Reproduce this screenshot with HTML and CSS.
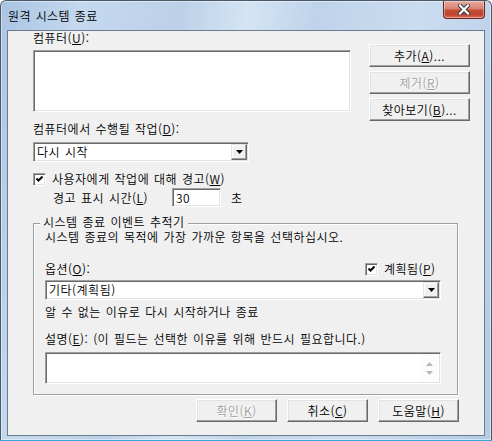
FILE: index.html
```html
<!DOCTYPE html>
<html lang="ko">
<head>
<meta charset="utf-8">
<title>원격 시스템 종료</title>
<link rel="stylesheet" href="styles.css">
</head>
<body>
<div class="window">
  <div class="titlebar">
    <span class="title">원격 시스템 종료</span>
    <div class="close">
      <svg width="12" height="11" viewBox="0 0 12 11"><path d="M2 1.5 L10 9.5 M10 1.5 L2 9.5" stroke="#3a3a3a" stroke-width="4.2" stroke-linecap="square"/><path d="M2 1.5 L10 9.5 M10 1.5 L2 9.5" stroke="#ffffff" stroke-width="2.2" stroke-linecap="square"/></svg>
    </div>
  </div>
  <div class="client">
    <div class="top">
      <div class="left">
        <div class="label">컴퓨터(<u>U</u>):</div>
        <div class="listbox sunken"></div>
      </div>
      <div class="side-buttons">
        <div class="btn">추가(<u>A</u>)...</div>
        <div class="btn disabled">제거(<u>R</u>)</div>
        <div class="btn">찾아보기(<u>B</u>)...</div>
      </div>
    </div>
    <div class="label l2">컴퓨터에서 수행될 작업(<u>D</u>):</div>
    <div class="combo sunken c1">
      <span class="value">다시 시작</span>
      <span class="drop"><svg width="7" height="4" viewBox="0 0 7 4"><path d="M0 0 H7 L3.5 4 Z" fill="#000"/></svg></span>
    </div>
    <div class="check-row">
      <span class="checkbox sunken"><svg width="9" height="9" viewBox="0 0 9 9"><path d="M1.5 3.5 L3.5 5.5 L7.5 1.5" fill="none" stroke="#000" stroke-width="2"/></svg></span>
      <span class="check-text">사용자에게 작업에 대해 경고(<u>W</u>)</span>
    </div>
    <div class="timer-row">
      <span class="timer-label">경고 표시 시간(<u>L</u>)</span>
      <div class="field sunken">30</div>
      <span class="unit">초</span>
    </div>
    <div class="group">
      <div class="legend"><span>시스템 종료 이벤트 추적기</span></div>
      <div class="line first">시스템 종료의 목적에 가장 가까운 항목을 선택하십시오.</div>
      <div class="option-row">
        <span class="opt-label">옵션(<u>O</u>):</span>
        <span class="checkbox sunken"><svg width="9" height="9" viewBox="0 0 9 9"><path d="M1.5 3.5 L3.5 5.5 L7.5 1.5" fill="none" stroke="#000" stroke-width="2"/></svg></span>
        <span class="check-text">계획됨(<u>P</u>)</span>
      </div>
      <div class="combo sunken c2">
        <span class="value">기타(계획됨)</span>
        <span class="drop"><svg width="7" height="4" viewBox="0 0 7 4"><path d="M0 0 H7 L3.5 4 Z" fill="#000"/></svg></span>
      </div>
      <div class="line reason">알 수 없는 이유로 다시 시작하거나 종료</div>
      <div class="line desc">설명(<u>E</u>): (이 필드는 선택한 이유를 위해 반드시 필요합니다.)</div>
      <div class="textarea sunken">
        <div class="vscroll">
          <svg width="7" height="4" viewBox="0 0 7 4"><path d="M0 4 H7 L3.5 0 Z" fill="#b8b8b8"/></svg>
          <svg width="7" height="4" viewBox="0 0 7 4"><path d="M0 0 H7 L3.5 4 Z" fill="#b8b8b8"/></svg>
        </div>
      </div>
    </div>
    <div class="bottom-buttons">
      <div class="btn disabled">확인(<u>K</u>)</div>
      <div class="btn">취소(<u>C</u>)</div>
      <div class="btn">도움말(<u>H</u>)</div>
    </div>
  </div>
</div>
</body>
</html>
```

FILE: styles.css
```css
* { box-sizing: border-box; }

html, body {
  margin: 0;
  padding: 0;
}

body {
  width: 492px;
  height: 441px;
  overflow: hidden;
  font-family: "Noto Sans CJK KR", "Liberation Sans", sans-serif;
  font-size: 12px;
  font-weight: 350;
  line-height: 14px;
  letter-spacing: 0.5px;
  word-spacing: 1px;
  color: #000;
  background: #fff;
}

u { text-underline-offset: 1px; }

.window {
  width: 492px;
  height: 441px;
  border: 1px solid #4a5868;
  border-bottom-color: #3aa8dc;
  border-radius: 6px 6px 1px 1px;
  background: linear-gradient(100deg, #a9c4e2 0%, #c4d8ee 14%, #bcd1e9 32%, #d4e4f3 44%, #bed3ea 56%, #cadcf0 74%, #b3cbe6 100%);
  box-shadow: inset 0 0 0 1px rgba(255,255,255,0.45);
  display: flex;
  flex-direction: column;
  padding: 0 6px 4px 6px;
}

.titlebar {
  height: 29px;
  display: flex;
  align-items: flex-start;
}

.title {
  align-self: center;
  padding-left: 1px;
  padding-top: 1px;
  font-size: 12px;
  letter-spacing: 0.4px;
  color: #000;
}

.close {
  margin-left: auto;
  width: 42px;
  height: 18px;
  border: 1px solid #6a2a22;
  border-top: none;
  border-radius: 0 0 4px 4px;
  background: linear-gradient(to bottom, #e9a99c 0%, #d98272 45%, #c44a33 55%, #c0432c 80%, #d9715a 100%);
  box-shadow: inset 0 0 0 1px rgba(255,255,255,0.35);
  display: flex;
  align-items: center;
  justify-content: center;
}

.client {
  flex: 1;
  background: #f0f0f0;
  border: 1px solid #6c7c90;
  padding-left: 25px;
  display: flex;
  flex-direction: column;
  align-items: flex-start;
}

.sunken {
  background: #fff;
  border: 1px solid;
  border-color: #a0a0a0 #fff #fff #a0a0a0;
  box-shadow: inset 1px 1px 0 #696969, inset -1px -1px 0 #e3e3e3;
}

.btn {
  height: 23px;
  display: flex;
  align-items: center;
  justify-content: center;
  background: #f0f0f0;
  border: 1px solid;
  border-color: #fff #696969 #696969 #fff;
  box-shadow: inset -1px -1px 0 #a0a0a0, inset 1px 1px 0 #e3e3e3;
}

.btn.disabled {
  color: #a0a0a0;
  text-shadow: 1px 1px 0 #fff;
}

.label {
  height: 14px;
}

.top {
  display: flex;
}

.left {
  width: 318px;
}

.listbox {
  margin-top: 5px;
  width: 318px;
  height: 62px;
}

.side-buttons {
  margin-left: 18px;
  width: 101px;
  padding-top: 13px;
  display: flex;
  flex-direction: column;
  gap: 4px;
}

.l2 {
  margin-top: 1px;
}

.combo {
  height: 20px;
  display: flex;
  align-items: center;
  padding: 1px 1px 1px 2px;
}

.combo .value {
  flex: 1;
  padding-left: 1px;
}

.drop {
  width: 16px;
  height: 16px;
  background: #f0f0f0;
  border: 1px solid;
  border-color: #e3e3e3 #696969 #696969 #e3e3e3;
  box-shadow: inset -1px -1px 0 #a0a0a0, inset 1px 1px 0 #fff;
  display: flex;
  align-items: center;
  justify-content: center;
}

.c1 {
  margin-top: 6px;
  width: 216px;
}

.check-row {
  margin-top: 10px;
  height: 14px;
  display: flex;
  align-items: center;
}

.checkbox {
  width: 13px;
  height: 13px;
  flex: none;
  display: flex;
  align-items: center;
  justify-content: center;
}

.check-text {
  margin-left: 6px;
}

.timer-row {
  margin-top: 2px;
  display: flex;
  align-items: center;
  padding-left: 20px;
}

.timer-label {
  width: 119px;
}

.field {
  width: 49px;
  height: 19px;
  padding: 1px 0 0 3px;
  display: flex;
  align-items: center;
}

.unit {
  margin-left: 10px;
}

.group {
  margin-top: 16px;
  width: 425px;
  border: 1px solid #a0a0a0;
  box-shadow: inset 1px 1px 0 #fff, 1px 1px 0 #fff;
  padding: 0 16px 10px 11px;
}

.legend {
  margin-top: -9px;
  height: 13px;
  line-height: 13px;
}

.legend span {
  display: inline-block;
  margin-left: -5px;
  padding: 0 3px;
  background: #f0f0f0;
  line-height: 13px;
}

.line {
  height: 14px;
  white-space: nowrap;
}

.line.first { margin-top: 2px; }

.option-row {
  margin-top: 18px;
  height: 14px;
  display: flex;
  align-items: center;
}

.opt-label {
  width: 320px;
  flex: none;
}

.c2 {
  margin-top: 4px;
  width: 396px;
}

.reason { margin-top: 5px; }

.desc { margin-top: 13px; }

.textarea {
  margin-top: 6px;
  width: 396px;
  height: 32px;
  display: flex;
  justify-content: flex-end;
  padding: 2px;
}

.vscroll {
  width: 17px;
  height: 100%;
  background: #fcfcfc;
  display: flex;
  flex-direction: column;
  align-items: center;
  justify-content: space-between;
  padding: 7px 0 6px 0;
}

.bottom-buttons {
  margin-top: 4px;
  margin-left: 163px;
  display: flex;
  gap: 10px;
}

.bottom-buttons .btn {
  width: 81px;
}
```
